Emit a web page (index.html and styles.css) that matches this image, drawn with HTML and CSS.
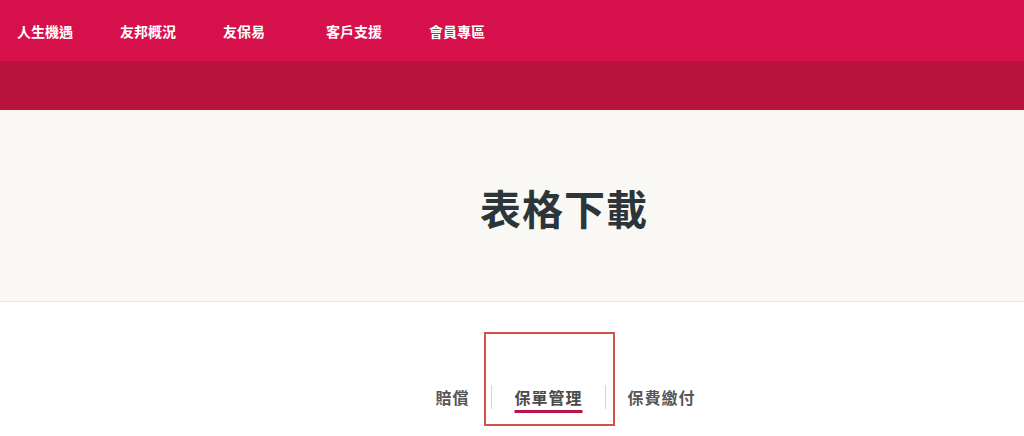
FILE: index.html
```html
<!DOCTYPE html>
<html lang="zh-Hant">
<head>
<meta charset="utf-8">
<title>表格下載</title>
<link rel="stylesheet" href="styles.css">
</head>
<body>
<header class="topnav">
  <nav class="menu">
    <a class="menu-item">人生機遇</a>
    <a class="menu-item">友邦概況</a>
    <a class="menu-item">友保易</a>
    <a class="menu-item">客戶支援</a>
    <a class="menu-item">會員專區</a>
  </nav>
</header>
<div class="subbar"></div>
<section class="hero">
  <h1 class="hero-title">表格下載</h1>
</section>
<section class="tabs-area">
  <div class="tabs">
    <div class="tab"><span class="tab-label">賠償</span></div>
    <div class="tab tab-active"><span class="tab-label">保單管理</span><span class="highlight-box"></span></div>
    <div class="tab"><span class="tab-label">保費繳付</span></div>
  </div>
</section>
</body>
</html>
```
FILE: styles.css
```css
* { box-sizing: border-box; }
html, body { margin: 0; padding: 0; }
body {
  width: 1024px;
  height: 436px;
  overflow: hidden;
  background: #ffffff;
  font-family: "Noto Sans CJK TC", "Noto Sans", sans-serif;
}
.topnav {
  height: 61px;
  background: #d6104a;
  display: flex;
  align-items: center;
  padding-left: 17px;
}
.menu { display: flex; }
.menu-item {
  width: 103px;
  color: #ffffff;
  font-size: 14px;
  font-weight: 700;
  line-height: 20px;
  text-decoration: none;
}
.subbar {
  height: 49px;
  background: #b8133d;
}
.hero {
  height: 192px;
  background: #f9f8f4;
  border-bottom: 1px solid #e8e6e2;
  display: flex;
  align-items: center;
  justify-content: center;
  padding-left: 104px;
  padding-top: 4px;
}
.hero-title {
  margin: 0;
  font-size: 41px;
  font-weight: 700;
  letter-spacing: 1px;
  color: #2c3539;
  line-height: 1.2;
}
.tabs-area {
  padding-top: 83px;
  padding-left: 107px;
  display: flex;
  justify-content: center;
}
.tabs { display: flex; }
.tab {
  position: relative;
  padding: 0 22px;
  height: 24px;
  border-left: 1px solid #d4d4d4;
}
.tab:first-child { border-left: none; }
.tab-label {
  display: block;
  font-size: 16px;
  line-height: 24px;
  font-weight: 700;
  letter-spacing: 1px;
  color: #575757;
  white-space: nowrap;
}
.tab-active .tab-label {
  color: #4a4a4a;
  text-decoration: underline;
  text-decoration-color: #b8164a;
  text-decoration-thickness: 3px;
  text-underline-offset: 6px;
}
.highlight-box {
  position: absolute;
  left: -8px;
  right: -10px;
  top: -53px;
  bottom: -17px;
  border: 2px solid #d6504c;
}
```
